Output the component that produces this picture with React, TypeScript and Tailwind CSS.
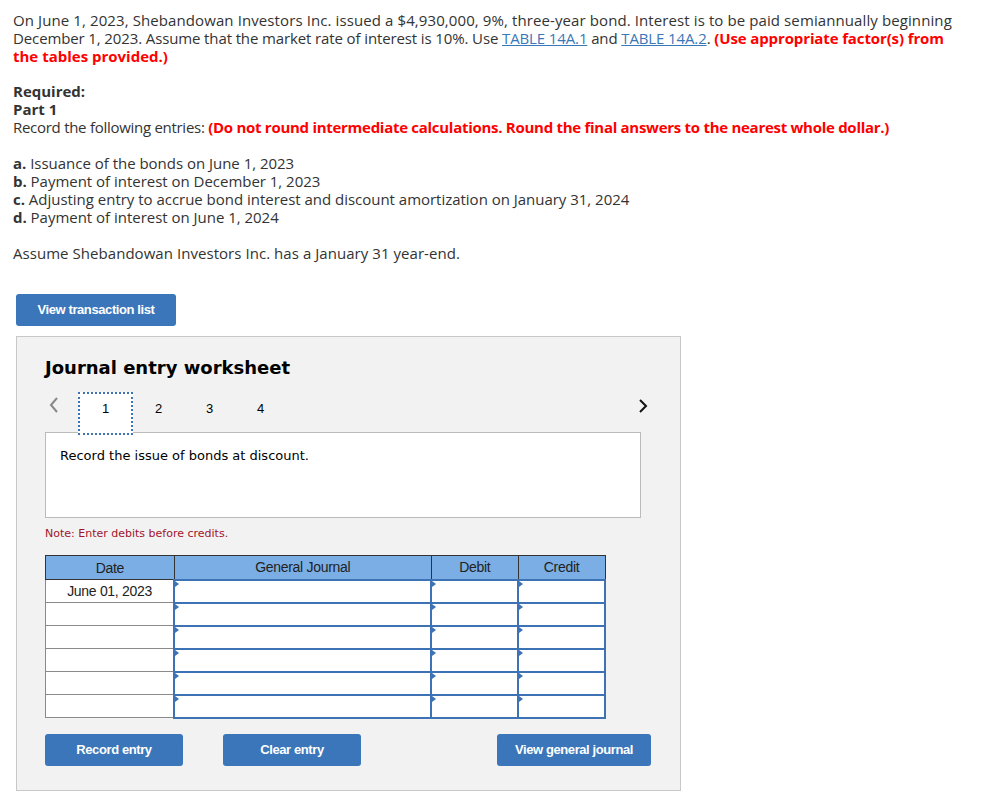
const Btn = ({ label, w }: { label: string; w: string }) => (
  <button
    className={`${w} h-8 shrink-0 rounded-[3px] bg-[#3a76b9] text-white text-[13px] font-bold tracking-[-0.4px] font-['Liberation_Sans',Arial,sans-serif]`}
  >
    {label}
  </button>
);

const Row = ({ date }: { date?: string }) => (
  <tr className="h-[23px]">
    <td className="border border-[#8a8a8a] bg-white text-center text-[14px] tracking-[-0.3px] text-[#222]">{date}</td>
    {[0, 1, 2].map((i) => (
      <td key={i} className="relative border-2 border-[#3d72b5] bg-white">
        <span className="absolute left-0 top-0 h-0 w-0 border-y-[3px] border-l-[4px] border-y-transparent border-l-[#3d72b5]" />
      </td>
    ))}
  </tr>
);

export default function App() {
  return (
    <div className="min-h-[801px] bg-white px-[13px] pt-[11px] text-[15px] leading-[18px] text-[#333] font-['Open_Sans',sans-serif]">
      <p className="whitespace-nowrap">
        <span className="tracking-[0.1px]">
          On June 1, 2023, Shebandowan Investors Inc. issued a $4,930,000, 9%, three-year bond. Interest is to be paid semiannually beginning
        </span>
        <br />
        <span className="tracking-[-0.12px]">
          December 1, 2023. Assume that the market rate of interest is 10%. Use{" "}
          <a className="text-[#3a77b9] underline">TABLE 14A.1</a> and <a className="text-[#3a77b9] underline">TABLE 14A.2</a>.{" "}
          <b className="text-[#f00]">(Use appropriate factor(s) from</b>
        </span>
        <br />
        <b className="text-[#f00]">the tables provided.)</b>
      </p>

      <p className="mt-[17px] font-bold">Required:</p>
      <p className="font-bold">Part 1</p>
      <p className="tracking-[-0.28px]">
        Record the following entries: <b className="text-[#f00]">(Do not round intermediate calculations. Round the final answers to the nearest whole dollar.)</b>
      </p>

      <div className="mt-[18px] tracking-[-0.02px]">
        <p><b>a.</b> Issuance of the bonds on June 1, 2023</p>
        <p><b>b.</b> Payment of interest on December 1, 2023</p>
        <p><b>c.</b> Adjusting entry to accrue bond interest and discount amortization on January 31, 2024</p>
        <p><b>d.</b> Payment of interest on June 1, 2024</p>
      </div>

      <p className="mt-[18px] tracking-[0.05px]">Assume Shebandowan Investors Inc. has a January 31 year-end.</p>

      <div className="ml-[3px] mt-[32px]">
        <Btn label="View transaction list" w="w-[160px]" />
      </div>

      <div className="ml-[3px] mt-[10px] w-[665px] border border-[#c8c8c8] bg-[#f2f2f2] px-[28px] pb-[24px] pt-[18px] font-['DejaVu_Sans',Verdana,sans-serif]">
        <h2 className="text-[18px] font-bold leading-[26px] text-black">Journal entry worksheet</h2>

        <div className="mt-[11px] flex h-[43px] items-start">
          <span className="mt-[4px] ml-[3px] w-[30px] text-[#888]">
            <svg width="12" height="18" viewBox="0 0 12 18"><path d="M9 2 3 9l6 7" fill="none" stroke="#888" strokeWidth="2" /></svg>
          </span>
          <div className="flex h-[43px] text-[13px] text-black font-['Liberation_Sans',Arial,sans-serif]">
            <div className="relative z-10 flex h-[43px] w-[55px] justify-center border-2 border-dotted border-[#3d72b5] bg-white pt-[6px]">1</div>
            <div className="w-[51px] pt-[8px] text-center">2</div>
            <div className="w-[51px] pt-[8px] text-center">3</div>
            <div className="w-[51px] pt-[8px] text-center">4</div>
          </div>
          <span className="ml-auto mt-[6px] mr-[3px]">
            <svg width="12" height="16" viewBox="0 0 12 16"><path d="M3 2l6 6-6 6" fill="none" stroke="#111" strokeWidth="2" /></svg>
          </span>
        </div>

        <div className="-mt-[3px] h-[86px] w-[596px] border border-[#bbb] bg-white px-[14px] pt-[14px] text-[13px] text-black">
          Record the issue of bonds at discount.
        </div>

        <p className="mt-[7px] text-[11px] text-[#a0142c]">Note: Enter debits before credits.</p>

        <table className="mt-[12px] w-[561px] border-collapse font-['Liberation_Sans',Arial,sans-serif]">
          <thead>
            <tr className="h-[24px] bg-[#7aaee4] text-[14px] font-normal tracking-[-0.3px] text-[#222]">
              <th className="w-[129px] border border-[#333] font-normal">Date</th>
              <th className="w-[258px] border border-[#333] font-normal">General Journal</th>
              <th className="w-[87px] border border-[#333] font-normal">Debit</th>
              <th className="w-[87px] border border-[#333] font-normal">Credit</th>
            </tr>
          </thead>
          <tbody>
            <Row date="June 01, 2023" />
            <Row />
            <Row />
            <Row />
            <Row />
            <Row />
          </tbody>
        </table>

        <div className="mt-[15px] flex">
          <Btn label="Record entry" w="w-[138px]" />
          <div className="ml-[40px]">
            <Btn label="Clear entry" w="w-[138px]" />
          </div>
          <div className="ml-[136px]">
            <Btn label="View general journal" w="w-[154px]" />
          </div>
        </div>
      </div>
    </div>
  );
}
